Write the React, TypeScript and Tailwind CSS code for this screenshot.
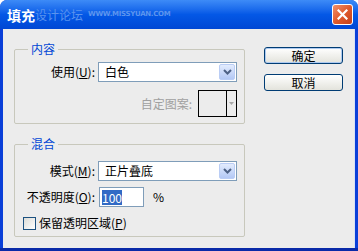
import React from "react";

const font = { fontFamily: '"Noto Sans CJK SC", "Liberation Sans", sans-serif' };

const Chevron = () => (
  <svg width="9" height="6" viewBox="0 0 9 6">
    <path d="M1 1 L4.5 4.5 L8 1" fill="none" stroke="#4d6185" strokeWidth="2" />
  </svg>
);

const Combo = ({ text }: { text: string }) => (
  <div className="w-[139px] h-[20px] border border-[#7f9db9] bg-white flex items-center">
    <span className="flex-1 pl-[6px] text-[12px] leading-[18px] text-black">{text}</span>
    <div className="w-[16px] h-[16px] mr-[1px] rounded-[2px] border border-[#bacdf5] bg-gradient-to-b from-[#e3ecfd] to-[#b3c8f5] flex items-center justify-center">
      <Chevron />
    </div>
  </div>
);

const Label = ({ children }: { children: React.ReactNode }) => (
  <div className="w-[80px] text-right text-[12px] leading-[16px] text-black whitespace-nowrap">{children}</div>
);

const GroupTitle = ({ children }: { children: React.ReactNode }) => (
  <div className="-mt-[9px] ml-[13px] px-[3px] w-fit bg-[#ececec] text-[12px] leading-[16px] text-[#0046d5]">
    {children}
  </div>
);

const Button = ({ children, primary }: { children: React.ReactNode; primary?: boolean }) => (
  <button
    className={
      primary
        ? "w-[79px] h-[17px] rounded-[3px] border border-[#003c74] bg-gradient-to-b from-white to-[#e3e3dc] shadow-[inset_0_0_0_1px_#aecaf0] text-[12px] leading-[14px] text-black"
        : "w-[79px] h-[17px] rounded-[3px] border border-[#003c74] bg-gradient-to-b from-white to-[#e3e3dc] text-[12px] leading-[14px] text-black"
    }
  >
    {children}
  </button>
);

export default function App() {
  return (
    <div className="w-[358px] h-[251px] flex flex-col rounded-t-[7px] overflow-hidden bg-[#0a3fd8]" style={font}>
      <div className="h-[29px] flex items-center pl-[7px] pr-[5px] bg-gradient-to-b from-[#3d8bf7] via-[#0458e6] to-[#0047d4]">
        <span className="text-[14px] font-bold text-white leading-none">填充</span>
        <span className="text-[12px] text-[#5a93ee] leading-none">设计论坛</span>
        <span className="ml-[5px] text-[7px] font-bold text-[#5d95ee] tracking-[-0.3px] leading-none" style={{ fontFamily: '"DejaVu Sans", sans-serif' }}>
          WWW.MISSYUAN.COM
        </span>
        <div className="ml-auto w-[21px] h-[21px] rounded-[3px] border border-white bg-gradient-to-br from-[#f0906a] via-[#e05a2c] to-[#c4401a] flex items-center justify-center">
          <svg width="11" height="11" viewBox="0 0 11 11">
            <path d="M1.5 1.5 L9.5 9.5 M9.5 1.5 L1.5 9.5" stroke="white" strokeWidth="2.2" strokeLinecap="square" />
          </svg>
        </div>
      </div>
      <div className="flex-1 flex pl-[3px] pr-[4px] border-b-[3px] border-[#0a2aa8]">
        <div className="flex-1 flex bg-[#ececec] pl-[11px] pr-[11px] border-r border-[#d7e2f6]">
          <div className="w-[231px] flex flex-col">
            <div className="mt-[20px] border border-[#c8c8bc] rounded-[2px] pb-[6px]">
              <GroupTitle>内容</GroupTitle>
              <div className="mt-[5px] flex items-center">
                <Label>
                  使用(<span className="underline">U</span>):
                </Label>
                <div className="ml-[3px]">
                  <Combo text="白色" />
                </div>
              </div>
              <div className="mt-[8px] flex items-center justify-end pr-[7px]">
                <span className="text-[12px] leading-[16px] text-[#a0a0a0]">自定图案:</span>
                <div className="ml-[6px] w-[39px] h-[27px] border border-black flex">
                  <div className="w-[27px]" />
                  <div className="flex-1 border-l border-black flex items-center justify-center">
                    <svg width="5" height="3" viewBox="0 0 5 3">
                      <path d="M0 0 H5 L2.5 3 Z" fill="#a8a8a8" />
                    </svg>
                  </div>
                </div>
              </div>
            </div>
            <div className="mt-[20px] border border-[#c8c8bc] rounded-[2px] pb-[5px]">
              <GroupTitle>混合</GroupTitle>
              <div className="mt-[9px] flex items-center">
                <Label>
                  模式(<span className="underline">M</span>):
                </Label>
                <div className="ml-[3px]">
                  <Combo text="正片叠底" />
                </div>
              </div>
              <div className="mt-[6px] flex items-center">
                <Label>
                  不透明度(<span className="underline">O</span>):
                </Label>
                <div className="ml-[4px] w-[45px] h-[20px] border border-[#7f9db9] bg-white flex items-center pl-[2px]">
                  <span className="bg-[#316ac5] text-white text-[12px] leading-[15px]">100</span>
                </div>
                <span className="ml-[9px] text-[12px] leading-[16px]">%</span>
              </div>
              <div className="mt-[8px] flex items-center pl-[8px]">
                <div className="w-[13px] h-[13px] border border-[#1c5180] bg-gradient-to-br from-[#dcdcd7] to-white" />
                <span className="ml-[3px] text-[12px] leading-[16px]">
                  保留透明区域(<span className="underline">P</span>)
                </span>
              </div>
            </div>
          </div>
          <div className="ml-[19px] w-[79px] pt-[18px] flex flex-col gap-[10px]">
            <Button primary>确定</Button>
            <Button>取消</Button>
          </div>
        </div>
      </div>
    </div>
  );
}
